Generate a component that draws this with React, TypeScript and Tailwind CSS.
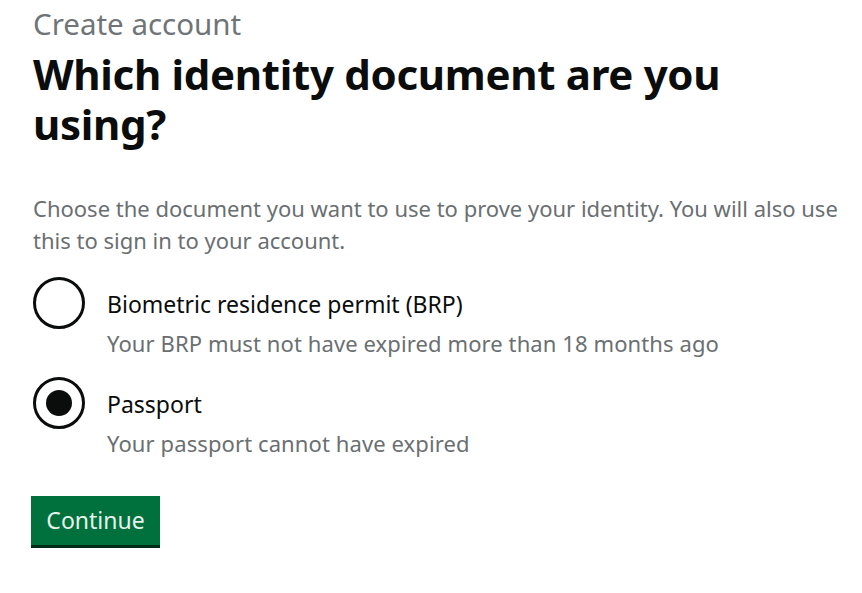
import React from "react";

const font = { fontFamily: '"Noto Sans", Arial, sans-serif' };

function Radio({ checked, label, hint }: { checked: boolean; label: string; hint: string }) {
  return (
    <div className="flex items-start">
      <div className="w-[52px] h-[52px] rounded-full border-[3px] border-[#0b0c0c] flex items-center justify-center shrink-0">
        {checked && <div className="w-[26px] h-[26px] rounded-full bg-[#0b0c0c]" />}
      </div>
      <div className="ml-[22px] pt-[12px]">
        <div className="text-[23px] leading-[30px] text-[#0b0c0c]">{label}</div>
        <div className="text-[22px] leading-[30px] mt-[9px] text-[#6a6f72] tracking-[0.1px]">{hint}</div>
      </div>
    </div>
  );
}

export default function App() {
  return (
    <div className="w-[862px] h-[593px] bg-white overflow-hidden" style={font}>
      <div className="pl-[33px] pt-[5px]">
        <div className="text-[29.5px] leading-[38px] text-[#6f7477]">Create account</div>
        <h1 className="text-[42px] leading-[50px] font-bold text-[#0b0c0c] mt-[6px] tracking-[-0.3px]">
          Which identity document are you
          <br />
          using?
        </h1>
        <p className="mt-[43px] text-[22px] leading-[32px] text-[#6a6f72]">
          Choose the document you want to use to prove your identity. You will also use
          <br />
          this to sign in to your account.
        </p>
        <div className="mt-[21px] flex flex-col gap-[19px]">
          <Radio checked={false} label="Biometric residence permit (BRP)" hint="Your BRP must not have expired more than 18 months ago" />
          <Radio checked={true} label="Passport" hint="Your passport cannot have expired" />
        </div>
        <button className="mt-[38px] -ml-[2px] w-[129px] h-[49px] bg-[#00703c] text-[#e6f4ec] text-[23px] shadow-[0_3px_0_#002d18] flex items-center justify-center">
          Continue
        </button>
      </div>
    </div>
  );
}
